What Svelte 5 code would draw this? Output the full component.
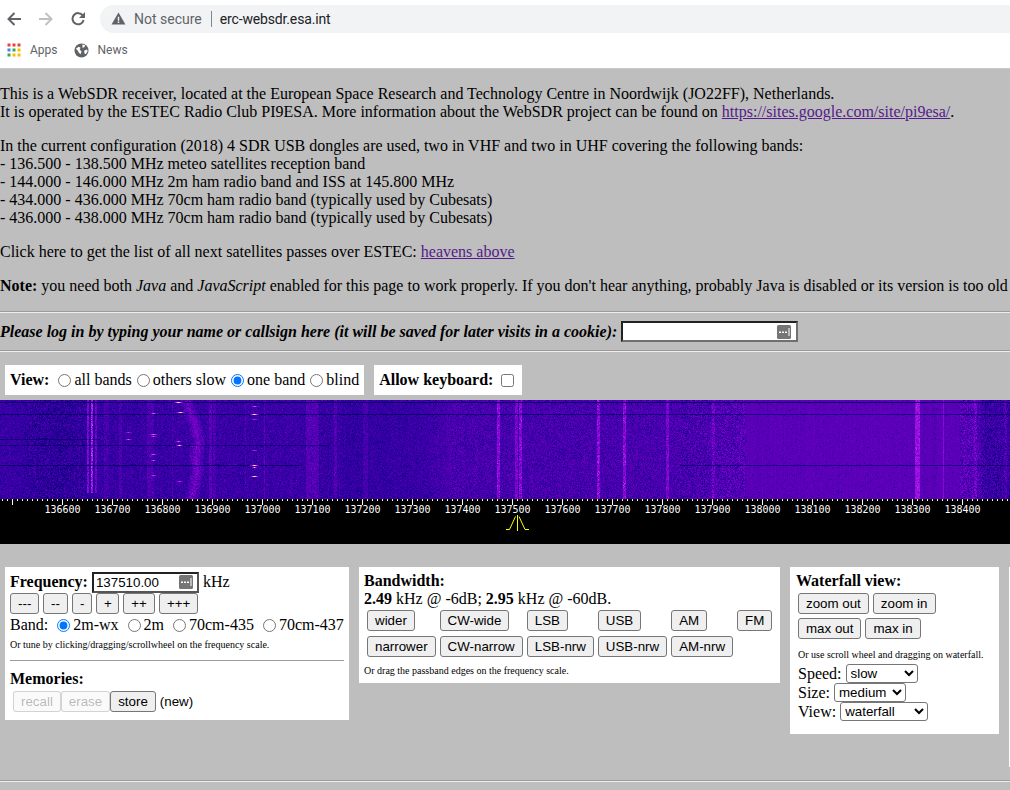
<script>
	import { onMount } from 'svelte';

	let canvas;

	const labels = [];
	for (let f = 136600; f <= 138400; f += 100) labels.push(f);
	const xOf = (f) => 62.5 + (f - 136600) * 0.5;

	const minor = [];
	for (let x = 2.5; x < 1010; x += 5) minor.push(x);

	// brightness per column: [centre x, half width, strength]
	const bands = [
		[87.5, 0.6, 0.28], [91.5, 0.6, 0.4], [95.5, 0.6, 0.22], [106, 2, 0.07], [120, 1, 0.08],
		[150, 3, 0.08], [172, 0.8, 0.08], [210, 1.5, 0.12], [214, 1, 0.08], [245, 0.7, 0.08],
		[264, 0.7, 0.12], [312, 6, 0.1], [335, 1.5, 0.1], [365, 2, 0.08], [498, 1.4, 0.24],
		[516, 1.2, 0.2], [520, 1.4, 0.24], [598, 1.5, 0.24], [624, 1.5, 0.24], [667, 1.3, 0.2],
		[713, 1, 0.12], [917, 2.5, 0.23], [943, 0.6, 0.16], [975, 1, 0.1], [1005, 1, 0.1]
	];

	// short bright carriers: [x, y, half width, strength]
	const carriers = [
		[178, 402, 4, 1], [180, 412, 4, 0.95], [153, 413, 3, 0.7], [254, 406, 3, 0.65], [254, 414, 4, 1],
		[254, 419, 3, 0.5], [128, 432, 3, 0.5], [128, 439, 3, 0.65], [153, 434, 4, 0.7], [153, 436, 3, 0.6],
		[178, 441, 3, 0.65], [179, 445, 3, 0.9], [153, 454, 3, 0.65], [153, 460, 2, 0.65], [254, 450, 3, 0.5],
		[254, 465, 4, 0.95], [254, 467, 2, 0.8], [254, 476, 4, 1], [153, 475, 3, 0.6], [179, 481, 3, 0.55]
	];

	const darkRows = [[402, 0, 1010, 0.75], [414, 0, 1010, 0.25], [445, 0, 330, 0.22], [465, 0, 300, 0.3], [465, 680, 1010, 0.25], [439, 0, 100, 0.22]];

	const stops = [
		[0, [10, 0, 110]], [0.22, [44, 0, 160]], [0.4, [92, 0, 184]], [0.62, [150, 10, 225]],
		[0.8, [220, 90, 235]], [1, [255, 250, 170]]
	];

	function colour(v) {
		v = Math.max(0, Math.min(1, v));
		for (let i = 1; i < stops.length; i++) {
			if (v <= stops[i][0]) {
				const [a, ca] = stops[i - 1];
				const [b, cb] = stops[i];
				const t = (v - a) / (b - a);
				return ca.map((c, k) => c + (cb[k] - c) * t);
			}
		}
		return stops[stops.length - 1][1];
	}

	function lerpPts(pts, at, fallback) {
		for (let i = 1; i < pts.length; i++) {
			if (at <= pts[i][0]) {
				const t = (at - pts[i - 1][0]) / (pts[i][0] - pts[i - 1][0]);
				return pts[i - 1][1] + (pts[i][1] - pts[i - 1][1]) * t;
			}
		}
		return fallback;
	}

	// slow trend across the band, read off the reference
	const basePts = [[0, 0.28], [30, 0.25], [60, 0.22], [100, 0.26], [200, 0.27], [300, 0.28], [360, 0.25], [420, 0.27], [450, 0.33], [560, 0.33], [700, 0.34], [745, 0.39], [900, 0.4], [975, 0.39], [985, 0.27], [1010, 0.27]];
	const driftPts = [[400, 186], [420, 193], [440, 198], [460, 195], [470, 197], [500, 191]];

	function speckle(x) {
		if (x > 25 && x < 85) return 0.12;
		if (x > 680 && x < 745) return 0.12;
		if (x > 745 && x < 960) return 0.03;
		if (x >= 960) return 0.12;
		if (x > 450) return 0.09;
		return 0.07;
	}

	onMount(() => {
		const ctx = canvas.getContext('2d');
		const w = canvas.width;
		const h = canvas.height;
		const img = ctx.createImageData(w, h);
		let seed = 20180;
		const rnd = () => {
			seed = (seed * 1664525 + 1013904223) >>> 0;
			return seed / 4294967296;
		};
		const streak = [];
		for (let x = 0; x < w; x++) streak.push((rnd() - 0.5) * 0.03);
		for (let y = 0; y < h; y++) {
			const py = y + 400;
			const drift = lerpPts(driftPts, py, 190);
			for (let x = 0; x < w; x++) {
				const s = speckle(x);
				let v = lerpPts(basePts, x, 0.3) + streak[x] + (rnd() - 0.5) * s * 2.2;
				if (rnd() < s * 1.3) v -= 0.13;
				if (x > 100 && x < 340 && rnd() < 0.03) v += 0.12;
				for (const [c, hw, a] of bands) {
					const d = Math.abs(x - c);
					if (d <= hw && !(c < 100 && py > 492)) v += a * (0.8 + rnd() * 0.4);
				}
				const dd = Math.abs(x - drift);
				if (dd < 7) v += 0.18 * (1 - dd / 7) + rnd() * 0.08;
				for (const [yy, x0, x1, a] of darkRows) {
					if (py === yy && x >= x0 && x < x1) v -= a * (x0 === 0 && x1 === 1010 ? 1 : 0.8 + rnd() * 0.4);
				}
				const c = colour(v);
				const i = (y * w + x) * 4;
				img.data[i] = c[0];
				img.data[i + 1] = c[1];
				img.data[i + 2] = c[2];
				img.data[i + 3] = 255;
			}
		}
		for (const [cx, cy, hw, a] of carriers) {
			for (let x = cx - hw; x <= cx + hw; x++) {
				const f = 1 - Math.abs(x - cx) / (hw + 1);
				const c = colour(0.3 + a * 0.7 * f + 0.05);
				const i = ((cy - 400) * w + x) * 4;
				img.data[i] = c[0];
				img.data[i + 1] = c[1];
				img.data[i + 2] = c[2];
			}
		}
		ctx.putImageData(img, 0, 0);
	});
</script>

{#snippet pickerIcon()}
	<svg class="picker" width="14" height="14" viewBox="0 0 14 14">
		<rect width="14" height="14" rx="1.500" fill="#757575" />
		<path d="M2 6.500h2v1.500H2zM5 6.500h2v1.500H5zM8 6.500h2v1.500H8zM11.500 3h1v8h-1z" fill="#fff" />
	</svg>
{/snippet}

<div class="browser">
	<div class="toolbar">
		<svg class="nav" width="14" height="14" viewBox="0 0 14 14"><path d="M14 7H2M7.500 1 1.500 7l6 6" fill="none" stroke="#5f6368" stroke-width="2" /></svg>
		<svg class="nav" width="14" height="14" viewBox="0 0 14 14"><path d="M0 7h12M6.500 1l6 6-6 6" fill="none" stroke="#bdc1c6" stroke-width="2" /></svg>
		<svg class="nav" width="14" height="14" viewBox="0 0 14 14"><path d="M11.800 3.600A5.600 5.600 0 1 0 12.600 8" fill="none" stroke="#5f6368" stroke-width="2" /><path d="M14 0v6H8z" fill="#5f6368" /></svg>
		<div class="omnibox">
			<svg width="15" height="13" viewBox="0 0 16 14"><path d="M8 0.500 15.500 13.500H.5z" fill="#5f6368" /><path d="M7.200 5h1.600v4.400H7.200zM7.200 10.200h1.600v1.600H7.200z" fill="#f1f3f4" /></svg>
			<span class="insecure">Not secure</span>
			<span class="divider"></span>
			<span class="host">erc-websdr.esa.int</span>
		</div>
	</div>
	<div class="bookmarks">
		<span class="bookmark">
			<svg width="14" height="14" viewBox="0 0 14 14">
				<rect x="0.5" y="0.5" width="3" height="3" fill="#ea4335" /><rect x="5.5" y="0.5" width="3" height="3" fill="#ea4335" /><rect x="10.5" y="0.5" width="3" height="3" fill="#ea4335" />
				<rect x="0.5" y="5.5" width="3" height="3" fill="#4285f4" /><rect x="5.5" y="5.5" width="3" height="3" fill="#34a853" /><rect x="10.5" y="5.5" width="3" height="3" fill="#fbbc04" />
				<rect x="0.5" y="10.5" width="3" height="3" fill="#34a853" /><rect x="5.5" y="10.5" width="3" height="3" fill="#fbbc04" /><rect x="10.5" y="10.5" width="3" height="3" fill="#fbbc04" />
			</svg>
			Apps
		</span>
		<span class="bookmark">
			<svg width="15" height="15" viewBox="0 0 16 16"><circle cx="8" cy="8" r="7.5" fill="#5f6368" /><path d="M2 6l3-2 2 1-1 2 2 2-1 3-2-2-1-2zM9 1.500l3 1-1 2-2 .5zM11 8l3-1 .5 2-2 3-1.500-1z" fill="#fff" /></svg>
			News
		</span>
	</div>
</div>

<div class="page">
	<p class="intro">
		This is a WebSDR receiver, located at the European Space Research and Technology Centre in Noordwijk (JO22FF), Netherlands.<br />
		It is operated by the ESTEC Radio Club PI9ESA. More information about the WebSDR project can be found on <a href="#site">https://sites.google.com/site/pi9esa/</a>.
	</p>
	<p>
		In the current configuration (2018) 4 SDR USB dongles are used, two in VHF and two in UHF covering the following bands:<br />
		- 136.500 - 138.500 MHz meteo satellites reception band<br />
		- 144.000 - 146.000 MHz 2m ham radio band and ISS at 145.800 MHz<br />
		- 434.000 - 436.000 MHz 70cm ham radio band (typically used by Cubesats)<br />
		- 436.000 - 438.000 MHz 70cm ham radio band (typically used by Cubesats)
	</p>
	<p>Click here to get the list of all next satellites passes over ESTEC: <a href="#heavens">heavens above</a></p>
	<p class="note"><b>Note:</b> you need both <i>Java</i> and <i>JavaScript</i> enabled for this page to work properly. If you don't hear anything, probably Java is disabled or its version is too old</p>

	<hr />
	<div class="login">
		<b><i>Please log in by typing your name or callsign here (it will be saved for later visits in a cookie):</i></b>
		<span class="login-input">{@render pickerIcon()}</span>
	</div>
	<hr />

	<div class="view-row">
		<div class="chip view-chip">
			<b>View:</b>
			<label><input type="radio" name="view" />all bands</label>
			<label><input type="radio" name="view" />others slow</label>
			<label><input type="radio" name="view" checked />one band</label>
			<label><input type="radio" name="view" />blind</label>
		</div>
		<div class="chip">
			<b>Allow keyboard:</b>
			<input class="check" type="checkbox" />
		</div>
	</div>

	<div class="waterfall">
		<canvas bind:this={canvas} width="1010" height="99"></canvas>
		<svg class="scale" width="1010" height="45" viewBox="0 0 1010 45">
			{#each minor as x}
				<line x1={x} x2={x} y1="0" y2="2" stroke="#fff" />
			{/each}
			<line x1="12.5" x2="12.5" y1="0" y2="6" stroke="#fff" />
			{#each labels as f}
				<line x1={xOf(f)} x2={xOf(f)} y1="0" y2="6" stroke="#fff" />
				<text x={xOf(f)} y="14" text-anchor="middle">{f}</text>
			{/each}
			<path d="M506 30.500h3.500l6-13M529 30.500h-4l-6-13" fill="none" stroke="#ff0" />
			<path d="M517.500 16v16" stroke="#ff0" />
		</svg>
	</div>

	<div class="panels">
		<div class="panel freq">
			<div class="freq-row">
				<b>Frequency:</b>
				<span class="freq-input">137510.00{@render pickerIcon()}</span>
				<span>kHz</span>
			</div>
			<div class="btns step">
				<button>---</button><button>--</button><button>-</button><button>+</button><button>++</button><button>+++</button>
			</div>
			<div class="bands">
				Band:
				<label><input type="radio" name="band" checked />2m-wx</label>
				<label><input type="radio" name="band" />2m</label>
				<label><input type="radio" name="band" />70cm-435</label>
				<label><input type="radio" name="band" />70cm-437</label>
			</div>
			<small>Or tune by clicking/dragging/scrollwheel on the frequency scale.</small>
			<hr class="inner" />
			<div class="memories"><b>Memories:</b></div>
			<div class="btns mem">
				<button disabled>recall</button><button disabled>erase</button><button>store</button>
				<span>(new)</span>
			</div>
		</div>

		<div class="panel bw">
			<div><b>Bandwidth:</b></div>
			<div><b>2.49</b> kHz @ -6dB; <b>2.95</b> kHz @ -60dB.</div>
			<div class="bw-grid">
				<button>wider</button><button>CW-wide</button><button>LSB</button><button>USB</button><button>AM</button><button>FM</button>
				<button>narrower</button><button>CW-narrow</button><button>LSB-nrw</button><button>USB-nrw</button><button>AM-nrw</button>
			</div>
			<small>Or drag the passband edges on the frequency scale.</small>
		</div>

		<div class="panel wf">
			<div><b>Waterfall view:</b></div>
			<div class="wf-btns first"><button>zoom out</button><button>zoom in</button></div>
			<div class="wf-btns"><button>max out</button><button>max in</button></div>
			<small>Or use scroll wheel and dragging on waterfall.</small>
			<div class="selects">
				<div>Speed: <select class="s-speed"><option>slow</option></select></div>
				<div>Size: <select class="s-size"><option>medium</option></select></div>
				<div>View: <select class="s-view"><option>waterfall</option></select></div>
			</div>
		</div>

		<div class="panel next"></div>
	</div>

	<hr class="bottom" />
</div>

<style>
	:global(body) {
		margin: 0;
		height: 790px;
		overflow: hidden;
		background: #bebebe;
	}

	.browser {
		height: 69px;
		background: #fff;
		font-family: Roboto, 'Liberation Sans', sans-serif;
		color: #5f6368;
		font-size: 13px;
		box-sizing: border-box;
		border-bottom: 1px solid #c8c8c8;
	}

	.toolbar {
		height: 36px;
		display: flex;
		align-items: center;
		padding-left: 7px;
		gap: 18px;
		box-sizing: border-box;
		padding-top: 1px;
	}

	.nav {
		flex: none;
	}

	.omnibox {
		flex: 1;
		height: 28px;
		margin-left: -3px;
		background: #f1f3f4;
		border-radius: 14px 0 0 14px;
		display: flex;
		align-items: center;
		padding-left: 11px;
		font-size: 14px;
	}

	.insecure {
		margin-left: 8px;
	}

	.divider {
		width: 1px;
		height: 16px;
		background: #80868b;
		margin: 0 8px 0 9px;
	}

	.host {
		color: #202124;
		letter-spacing: -0.15px;
	}

	.bookmarks {
		height: 32px;
		display: flex;
		align-items: center;
		padding-left: 7px;
		gap: 16px;
		font-size: 12px;
		padding-bottom: 4px;
		box-sizing: border-box;
	}

	.bookmark {
		display: flex;
		align-items: center;
		gap: 9px;
	}

	.page {
		font: 16px/18px 'Liberation Serif', 'Times New Roman', serif;
		color: #000;
		white-space: nowrap;
		overflow: hidden;
	}

	p {
		margin: 16px 0;
	}

	a {
		color: #551a8b;
	}

	hr {
		margin: 0;
		border: 0;
		border-top: 1px solid #9a9a9a;
		border-bottom: 1px solid #eee;
	}

	.login {
		display: flex;
		align-items: center;
		height: 37px;
		gap: 4px;
	}

	.login-input {
		width: 177px;
		height: 21px;
		box-sizing: border-box;
		background: #fff;
		border-style: solid;
		border-width: 2px;
		border-color: #222 #6f6f6f #6f6f6f #222;
		display: flex;
		justify-content: flex-end;
		align-items: center;
		padding-right: 5px;
	}

	.picker {
		flex: none;
	}

	.view-row {
		display: flex;
		gap: 10px;
		padding: 13px 0 5px 5px;
	}

	.chip {
		background: #fff;
		height: 30px;
		box-sizing: border-box;
		display: flex;
		align-items: center;
		padding: 0 5px;
	}

	.view-chip label:first-of-type {
		margin-left: 4px;
	}

	label {
		display: flex;
		align-items: center;
	}

	input[type='radio'] {
		width: 13px;
		height: 13px;
		margin: 0 3px 0 5px;
	}

	.check {
		width: 13px;
		height: 13px;
		margin: 0 3px 0 8px;
	}

	.waterfall {
		display: flex;
		flex-direction: column;
		width: 1010px;
		background: #000;
	}

	canvas {
		display: block;
	}

	.scale {
		display: block;
	}

	.scale text {
		font: 10px 'DejaVu Sans Mono', monospace;
		fill: #fff;
	}

	.panels {
		display: flex;
		align-items: flex-start;
		gap: 10px;
		padding: 23px 0 0 5px;
		height: 236px;
		box-sizing: border-box;
		width: 1100px;
	}

	.panel {
		background: #fff;
		padding: 5px;
		box-sizing: border-box;
		flex: none;
	}

	button {
		font: 13.333px 'Liberation Sans', Arial, sans-serif;
		height: 21px;
		padding: 0 7px;
		box-sizing: border-box;
		background: #efefef;
		color: #000;
		border: 1px solid #767676;
		border-radius: 3px;
		margin: 0;
	}

	button:disabled {
		color: rgba(16, 16, 16, 0.3);
		background: rgba(239, 239, 239, 0.3);
		border-color: rgba(118, 118, 118, 0.3);
	}

	small {
		display: block;
		font-size: 10px;
		line-height: 12px;
	}

	.freq {
		width: 344px;
		height: 153px;
	}

	.freq-row {
		display: flex;
		align-items: center;
		gap: 4px;
		height: 20px;
	}

	.freq-input {
		width: 107px;
		height: 21px;
		box-sizing: border-box;
		border: 2px solid;
		border-color: #222 #555 #555 #222;
		font: 13.333px 'Liberation Sans', Arial, sans-serif;
		display: flex;
		align-items: center;
		justify-content: space-between;
		padding: 0 4px 0 2px;
	}

	.step {
		display: flex;
		gap: 4px;
		margin-top: 1px;
	}

	.step button:nth-child(1) { width: 29px; }
	.step button:nth-child(2) { width: 25px; }
	.step button:nth-child(3) { width: 20px; }
	.step button:nth-child(4) { width: 23px; }
	.step button:nth-child(5) { width: 32px; }
	.step button:nth-child(6) { width: 39px; }

	.bands {
		display: flex;
		align-items: center;
		height: 22px;
		gap: 4px;
	}

	.freq small {
		margin-top: 3px;
	}

	hr.inner {
		margin: 9px 0;
		border: 0;
		border-top: 1px solid #9a9a9a;
	}

	.memories {
		height: 18px;
	}

	.mem {
		display: flex;
		align-items: center;
		margin: 3px 0 0 3px;
		font: 13.333px 'Liberation Sans', Arial, sans-serif;
	}

	.mem span {
		margin-left: 4px;
	}

	.bw {
		width: 421px;
		height: 116px;
	}

	.bw-grid {
		display: grid;
		grid-template-columns: repeat(6, auto);
		justify-content: start;
		justify-items: start;
		gap: 4px;
		row-gap: 5px;
		margin: 2px 0 0 3px;
	}

	.bw small {
		margin-top: 8px;
	}

	.wf {
		width: 209px;
		height: 167px;
		padding-left: 6px;
	}

	.wf-btns {
		display: flex;
		gap: 4px;
		margin: 0 0 4px 2px;
	}

	.wf-btns.first {
		margin-top: 3px;
	}

	.wf small {
		margin: 10px 0 3px 2px;
	}

	.selects {
		margin-left: 2px;
		line-height: 19px;
	}

	select {
		font: 13.333px 'Liberation Sans', Arial, sans-serif;
		height: 19px;
		background: #fff;
		border: 1px solid #767676;
		border-radius: 3px;
		padding: 0;
		vertical-align: top;
	}

	.s-speed { width: 72px; }
	.s-size { width: 72px; }
	.s-view { width: 88px; }

	.next {
		width: 60px;
		height: 200px;
	}
</style>
